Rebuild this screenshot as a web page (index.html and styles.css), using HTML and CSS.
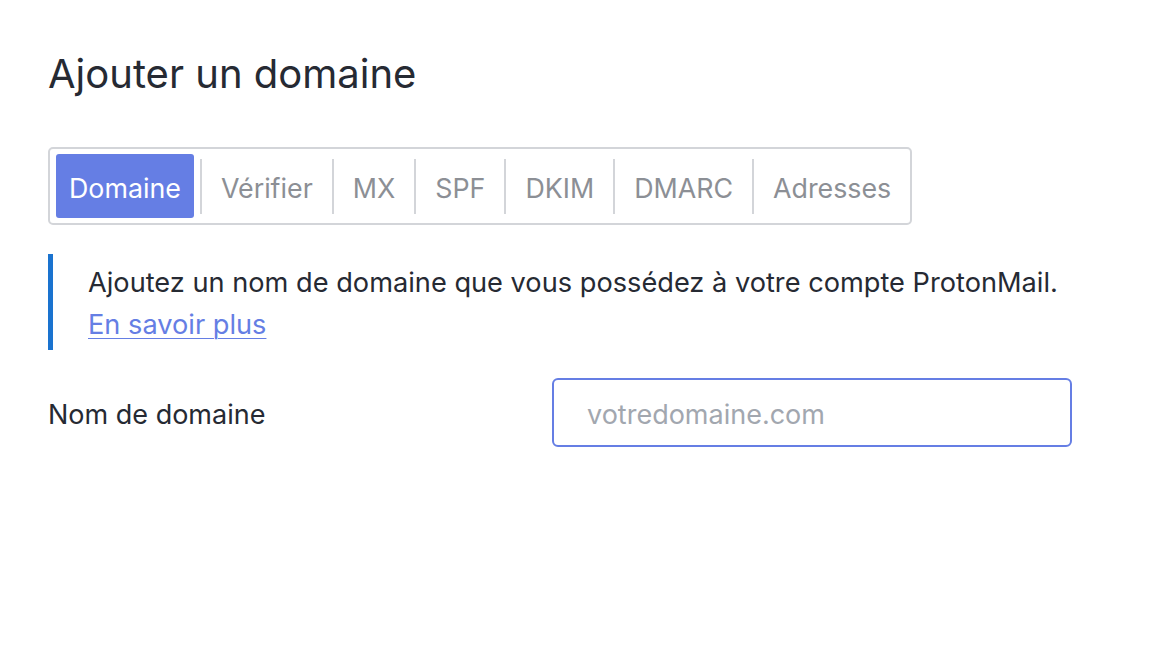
FILE: index.html
```html
<!DOCTYPE html>
<html lang="fr">
<head>
<meta charset="utf-8">
<title>Ajouter un domaine</title>
<link rel="stylesheet" href="styles.css">
</head>
<body>
<main class="page">
  <h1 class="title">Ajouter un domaine</h1>
  <nav class="tabs">
    <span class="tab tab-active">Domaine</span>
    <span class="sep"></span>
    <span class="tab">Vérifier</span>
    <span class="sep"></span>
    <span class="tab">MX</span>
    <span class="sep"></span>
    <span class="tab">SPF</span>
    <span class="sep"></span>
    <span class="tab">DKIM</span>
    <span class="sep"></span>
    <span class="tab">DMARC</span>
    <span class="sep"></span>
    <span class="tab">Adresses</span>
  </nav>
  <div class="notice">
    <p class="notice-text">Ajoutez un nom de domaine que vous possédez à votre compte ProtonMail.</p>
    <a class="notice-link" href="#">En savoir plus</a>
  </div>
  <div class="field">
    <label class="field-label" for="domain">Nom de domaine</label>
    <input class="field-input" id="domain" type="text" placeholder="votredomaine.com">
  </div>
</main>
</body>
</html>
```
FILE: styles.css
```css
* { box-sizing: border-box; }
html, body { margin: 0; background: #ffffff; }
body {
  font-family: Inter, "Liberation Sans", sans-serif;
  color: #262a33;
  font-size: 27px;
}
.page {
  padding: 46px 84px 0 48px;
}
.title {
  margin: 0;
  font-size: 40px;
  font-weight: 400;
  line-height: 56px;
  color: #262a33;
}
.tabs {
  margin-top: 45px;
  display: inline-flex;
  align-items: center;
  border: 2px solid #d3d5d9;
  border-radius: 5px;
  padding: 5px 6px;
  font-size: 26.8px;
}
.tab {
  height: 64px;
  padding: 4px 13px 0;
  line-height: 60px;
  color: #8c8f95;
  border-radius: 3px;
  white-space: nowrap;
}
.tab-active {
  background: #657ee4;
  color: #ffffff;
}
.sep {
  width: 2px;
  height: 55px;
  margin: 0 6px;
  background: #d3d5d9;
}
.notice {
  margin-top: 29px;
  border-left: 5px solid #1a73cf;
  padding: 8px 0 4px 35px;
  line-height: 42px;
  font-size: 27.2px;
}
.notice-text { margin: 0; }
.notice-link {
  color: #657ee4;
  text-decoration: underline;
  text-underline-offset: 4px;
  text-decoration-thickness: 1px;
}
.field {
  margin-top: 28px;
  display: grid;
  grid-template-columns: 504px 520px;
  align-items: center;
}
.field-label {
  color: #262a33;
  padding-top: 4px;
}
.field-input {
  height: 69px;
  border: 2px solid #657ee4;
  border-radius: 6px;
  padding: 4px 33px 0;
  font: inherit;
  color: #262a33;
  outline: none;
  background: #fff;
}
.field-input::placeholder { color: #a2a7af; }
```
